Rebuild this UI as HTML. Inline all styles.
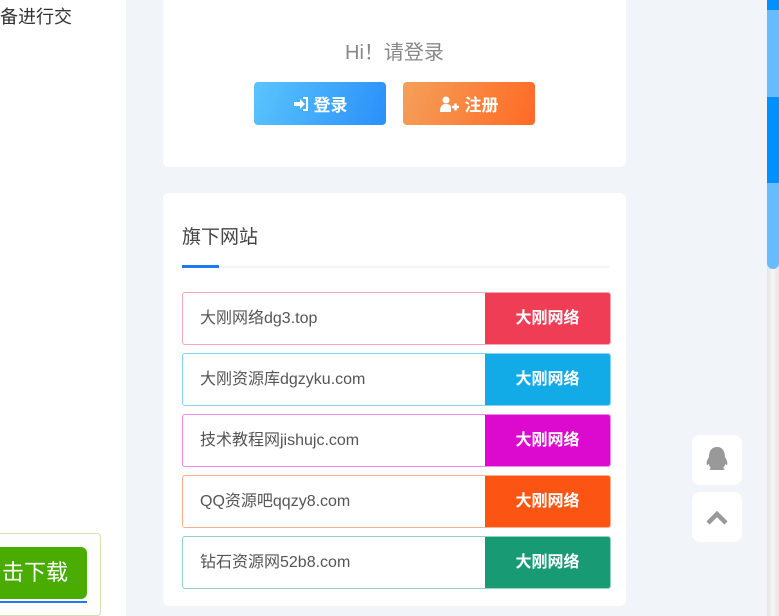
<!DOCTYPE html>
<html><head><meta charset="utf-8"><style>
*{margin:0;padding:0;box-sizing:border-box}
body{width:779px;height:616px;overflow:hidden;position:relative;background:#f1f4f9;font-family:"Liberation Sans","Noto Sans CJK SC",sans-serif}
.left{position:absolute;left:0;top:0;width:126px;height:616px;background:#fff}
.card{position:absolute;left:163px;width:463px;background:#fff;border-radius:6px}
.btn{position:absolute;top:92px;width:132px;height:43px;border-radius:4px;color:#fff;font-size:17px;font-weight:bold;display:flex;align-items:center;justify-content:center;gap:5px}
.row{position:absolute;left:19px;width:429px;height:53px;border:1px solid;border-radius:3px;display:flex;overflow:hidden}
.row .t{flex:1;padding-left:17px;line-height:51px;font-size:16px;color:#555}
.row .b{width:125px;color:#fff;font-weight:bold;font-size:16px;text-align:center;line-height:51px}
.fb{position:absolute;left:692px;width:50px;height:50px;background:#fff;border-radius:8px}
</style></head><body>
<div class="left">
<div style="position:absolute;left:0;top:3px;font-size:18px;color:#333">备进行交</div>
<div style="position:absolute;left:-10px;top:533px;width:111px;height:83px;border:1px solid #d3e0b8;border-radius:4px;background:#fdfdfb"></div>
<div style="position:absolute;left:-10px;top:547px;width:97px;height:52px;background:#4aac00;border-radius:6px;color:#fff;font-size:22px;line-height:52px;padding-left:12px">击下载</div>
<div style="position:absolute;left:0;top:601px;width:87px;height:2px;background:#1e7af0"></div>
</div>
<div class="card" style="top:-10px;height:177px">
<div style="position:absolute;top:51px;width:100%;text-align:center;font-size:20px;line-height:24px;color:#888">Hi！请登录</div>
<div class="btn" style="left:91px;background:linear-gradient(110deg,#5ac5fc,#2a8ffa)"><svg width="16" height="16" viewBox="0 0 16 16"><path d="M1 6h6V3l5 5-5 5v-3H1z" fill="#fff"/><path d="M10 2h4v12h-4" stroke="#fff" stroke-width="2" fill="none"/></svg>登录</div>
<div class="btn" style="left:240px;background:linear-gradient(110deg,#f4a05a,#ff6a24)"><svg width="20" height="16" viewBox="0 0 20 16"><circle cx="6" cy="4" r="3.5" fill="#fff"/><path d="M0 16c0-6 2-8 6-8s5 2 5 4v4z" fill="#fff"/><path d="M12 11h7M15.5 7.5v7" stroke="#fff" stroke-width="2.4"/></svg>注册</div>
</div>
<div class="card" style="top:193px;height:413px">
<div style="position:absolute;left:19px;top:29px;font-size:19px;color:#444">旗下网站</div>
<div style="position:absolute;left:19px;top:73px;width:427px;height:2px;background:#f3f4f6"></div>
<div style="position:absolute;left:19px;top:72px;width:37px;height:3px;background:#1e7af0"></div>
<div class="row" style="top:99px;border-color:#f6a9b4"><div class="t">大刚网络dg3.top</div><div class="b" style="background:#ef3d55">大刚网络</div></div>
<div class="row" style="top:160px;border-color:#86d3f0"><div class="t">大刚资源库dgzyku.com</div><div class="b" style="background:#13aae8">大刚网络</div></div>
<div class="row" style="top:221px;border-color:#ef8ee9"><div class="t">技术教程网jishujc.com</div><div class="b" style="background:#dc09ce">大刚网络</div></div>
<div class="row" style="top:282px;border-color:#fcb18b"><div class="t">QQ资源吧qqzy8.com</div><div class="b" style="background:#fc5513">大刚网络</div></div>
<div class="row" style="top:343px;border-color:#8fd3c0"><div class="t">钻石资源网52b8.com</div><div class="b" style="background:#189a75">大刚网络</div></div>
</div>
<div class="fb" style="top:435px"><svg width="50" height="50" viewBox="0 0 50 50"><path d="M25 12c-6 0-8 5-8 10-2 3-3 6-2 8 1 0 2-1 2-1 0 2 1 3 2 4-2 1-2 2 0 2h12c2 0 2-1 0-2 1-1 2-2 2-4 0 0 1 1 2 1 1-2 0-5-2-8 0-5-2-10-8-10z" fill="#999"/></svg></div>
<div class="fb" style="top:492px"><svg width="50" height="50" viewBox="0 0 50 50"><path d="M16 31l9-9 9 9" stroke="#999" stroke-width="4.5" fill="none"/></svg></div>
<div style="position:absolute;left:767px;top:0;width:12px;height:616px;background:linear-gradient(90deg,#e4e4e4,#f5f5f5,#e4e4e4)"></div>
<div style="position:absolute;left:767px;top:0;width:12px;height:269px;border-radius:0 0 6px 6px;overflow:hidden">
<div style="position:absolute;left:0;top:0;width:12px;height:10px;background:#0091ff"></div>
<div style="position:absolute;left:0;top:10px;width:12px;height:90px;background:#66bcff"></div>
<div style="position:absolute;left:0;top:97px;width:12px;height:88px;background:#0091ff"></div>
<div style="position:absolute;left:0;top:183px;width:12px;height:90px;background:#66bcff"></div>
</div>
</body></html>
